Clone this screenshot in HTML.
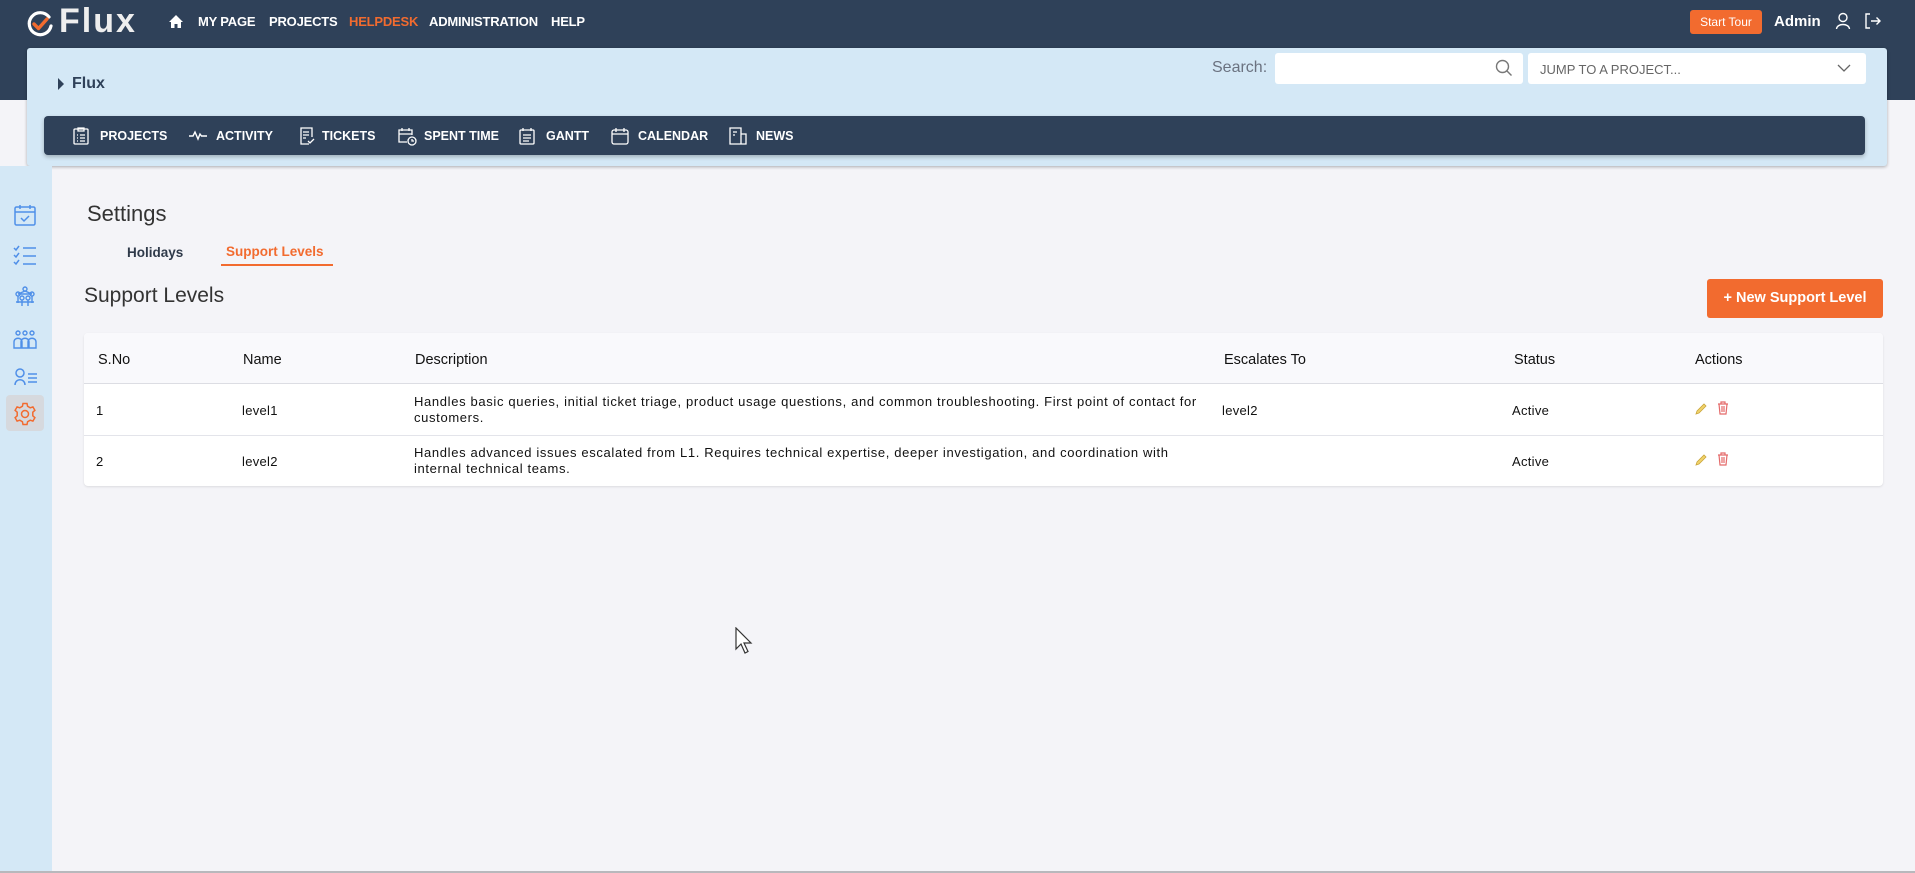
<!DOCTYPE html>
<html><head><meta charset="utf-8">
<style>
*{box-sizing:border-box;margin:0;padding:0}
body{width:1915px;height:873px;overflow:hidden;background:#f4f4f8;font-family:"Liberation Sans",sans-serif;position:relative;color:#222}
.abs{position:absolute}
.top{left:0;top:0;width:1915px;height:100px;background:#2f4159}
.nav{top:14px;color:#fff;font-size:13px;font-weight:bold;letter-spacing:-0.2px}
.panel{left:27px;top:48px;width:1860px;height:118px;background:#d4e8f6;border-radius:3px;box-shadow:0 1px 3px rgba(0,0,0,.3)}
.sub{left:44px;top:116px;width:1821px;height:39px;background:#2f4159;border-radius:4px;box-shadow:0 2px 4px rgba(0,0,0,.25)}
.si{top:13px;color:#fff;font-size:12.5px;font-weight:bold}
.sic{top:11px}
.side{left:0;top:166px;width:52px;height:705px;background:#d4e8f6}
.th{top:352px;font-size:14.5px;color:#111}
.td{font-size:13px;color:#111;letter-spacing:0.3px}
.desc{letter-spacing:0.65px}
</style></head><body>
<div class="abs top"></div>
<svg class="abs" style="left:25px;top:9px" width="30" height="30" viewBox="0 0 30 30"><path d="M24 8 A11 11 0 1 0 26 17" fill="none" stroke="#fff" stroke-width="3.2" stroke-linecap="round"/><path d="M9 15 L13.5 19.5 L22 10" fill="none" stroke="#f26b2f" stroke-width="3.4" stroke-linecap="round" stroke-linejoin="round"/></svg>
<div class="abs" style="left:59px;top:2px;color:#eee;font-size:34px;font-weight:bold;letter-spacing:2px">Flux</div>
<svg class="abs" style="left:168px;top:14px" width="16" height="15" viewBox="0 0 16 15"><path d="M8 1 L15 8 H13 V14 H9.5 V10 H6.5 V14 H3 V8 H1 Z" fill="#fff"/></svg>
<div class="abs nav" style="left:198px">MY PAGE</div>
<div class="abs nav" style="left:269px">PROJECTS</div>
<div class="abs nav" style="left:349px;color:#f26b2f">HELPDESK</div>
<div class="abs nav" style="left:429px">ADMINISTRATION</div>
<div class="abs nav" style="left:551px">HELP</div>
<div class="abs" style="left:1690px;top:10px;width:72px;height:24px;background:#f26b2f;border-radius:3px;color:#fff;font-size:12px;line-height:24px;text-align:center">Start Tour</div>
<div class="abs" style="left:1774px;top:13px;color:#fff;font-size:15px;font-weight:bold">Admin</div>
<svg class="abs" style="left:1835px;top:12px" width="16" height="18" viewBox="0 0 16 18"><circle cx="8" cy="5.5" r="4" fill="none" stroke="#fff" stroke-width="1.4"/><path d="M1.5 17 C2 11 14 11 14.5 17" fill="none" stroke="#fff" stroke-width="1.4"/></svg>
<svg class="abs" style="left:1864px;top:12px" width="18" height="18" viewBox="0 0 18 18"><path d="M6 2 H2 V16 H6" fill="none" stroke="#fff" stroke-width="1.4"/><path d="M7 9 H16 M12.5 5.5 L16 9 L12.5 12.5" fill="none" stroke="#fff" stroke-width="1.4"/></svg>

<div class="abs panel"></div>
<div class="abs" style="left:58px;top:78px;width:0;height:0;border-top:6px solid transparent;border-bottom:6px solid transparent;border-left:6px solid #2f4159"></div>
<div class="abs" style="left:72px;top:75px;font-size:16px;font-weight:bold;color:#2f4159">Flux</div>
<div class="abs" style="left:1212px;top:59px;font-size:16px;color:#6b7280">Search:</div>
<div class="abs" style="left:1275px;top:53px;width:248px;height:31px;background:#fff;border-radius:3px"></div>
<svg class="abs" style="left:1495px;top:59px" width="18" height="18" viewBox="0 0 18 18"><circle cx="7.5" cy="7.5" r="6" fill="none" stroke="#777" stroke-width="1.4"/><path d="M12 12 L16.5 16.5" stroke="#777" stroke-width="1.4"/></svg>
<div class="abs" style="left:1528px;top:53px;width:338px;height:31px;background:#fff;border-radius:3px"></div>
<div class="abs" style="left:1540px;top:62px;font-size:13px;color:#666">JUMP TO A PROJECT...</div>
<svg class="abs" style="left:1837px;top:63px" width="14" height="10" viewBox="0 0 14 10"><path d="M1 2 L7 8 L13 2" fill="none" stroke="#666" stroke-width="1.3"/></svg>

<div class="abs sub">
<svg class="abs sic" style="left:29px" width="16" height="18" viewBox="0 0 16 18" fill="none" stroke="#fff" stroke-width="1.3"><rect x="1" y="2" width="14" height="15" rx="1"/><path d="M5 1 H11 V4 H5 Z M4 8 H5 M7 8 H12 M4 11 H5 M7 11 H12 M4 14 H5 M7 14 H12"/></svg>
<div class="abs si" style="left:56px">PROJECTS</div>
<svg class="abs sic" style="left:145px;top:13px" width="18" height="12" viewBox="0 0 18 12" fill="none" stroke="#fff" stroke-width="1.4"><path d="M0 7 H4 L6 3 L9 10 L11 5 L12.5 7 H18"/></svg>
<div class="abs si" style="left:172px">ACTIVITY</div>
<svg class="abs sic" style="left:255px" width="16" height="18" viewBox="0 0 16 18" fill="none" stroke="#fff" stroke-width="1.3"><path d="M10 17 H2 V1 H13 V10 M4 5 H10 M4 8 H10 M4 11 H7 M9 14 L11 16 L15 12"/></svg>
<div class="abs si" style="left:278px">TICKETS</div>
<svg class="abs sic" style="left:354px" width="19" height="19" viewBox="0 0 19 19" fill="none" stroke="#fff" stroke-width="1.3"><path d="M9 15 H1 V3 H14 V8 M1 7 H14 M4 1 V4 M11 1 V4"/><circle cx="14" cy="14" r="4"/><path d="M14 12 V14 H16"/></svg>
<div class="abs si" style="left:380px">SPENT TIME</div>
<svg class="abs sic" style="left:475px" width="16" height="18" viewBox="0 0 16 18" fill="none" stroke="#fff" stroke-width="1.3"><rect x="1" y="3" width="14" height="14" rx="1"/><path d="M4 1 V4 M12 1 V4 M4 8 H12 M4 11 H12 M4 14 H10"/></svg>
<div class="abs si" style="left:502px">GANTT</div>
<svg class="abs sic" style="left:567px" width="18" height="18" viewBox="0 0 18 18" fill="none" stroke="#fff" stroke-width="1.3"><rect x="1" y="3" width="16" height="14" rx="2"/><path d="M5 1 V5 M13 1 V5 M1 7 H17"/></svg>
<div class="abs si" style="left:594px">CALENDAR</div>
<svg class="abs sic" style="left:685px" width="18" height="18" viewBox="0 0 18 18" fill="none" stroke="#fff" stroke-width="1.3"><path d="M12 17 H1 V1 H12 V17 M12 7 H17 V17 H12 M4 5 H8 M4 8 H6"/></svg>
<div class="abs si" style="left:712px">NEWS</div>
</div>

<div class="abs side"></div>
<svg class="abs" style="left:14px;top:204px" width="22" height="22" viewBox="0 0 22 22" fill="none" stroke="#4f8fe8" stroke-width="1.5"><rect x="1" y="3" width="20" height="18" rx="1.5"/><path d="M1 8 H21 M6 1 V5 M16 1 V5 M7 14 L10 17 L15 12"/></svg>
<svg class="abs" style="left:13px;top:245px" width="24" height="22" viewBox="0 0 24 22" fill="none" stroke="#4f8fe8" stroke-width="1.5"><path d="M1 3 L3 5 L6 1 M1 10 L3 12 L6 8 M1 17 L3 19 L6 15 M10 3 H23 M10 11 H23 M10 19 H23"/></svg>
<svg class="abs" style="left:14px;top:286px" width="22" height="22" viewBox="0 0 22 22" fill="none" stroke="#4f8fe8" stroke-width="1.4"><circle cx="11" cy="3" r="2"/><circle cx="4" cy="8" r="2"/><circle cx="18" cy="8" r="2"/><circle cx="8" cy="12" r="2"/><circle cx="14" cy="12" r="2"/><path d="M11 5 L4 8 M11 5 L18 8 M4 10 V17 M18 10 V17 M8 14 V20 M14 14 V20 M4 8 H18 M2 16 H20"/></svg>
<svg class="abs" style="left:13px;top:330px" width="24" height="20" viewBox="0 0 24 20" fill="none" stroke="#4f8fe8" stroke-width="1.4"><circle cx="5" cy="3" r="2"/><circle cx="12" cy="3" r="2"/><circle cx="19" cy="3" r="2"/><path d="M1 12 C1 7 9 7 9 12 V18 H1 Z M8 12 C8 7 16 7 16 12 V18 H8 Z M15 12 C15 7 23 7 23 12 V18 H15 Z"/></svg>
<svg class="abs" style="left:14px;top:368px" width="24" height="18" viewBox="0 0 24 18" fill="none" stroke="#4f8fe8" stroke-width="1.5"><circle cx="6" cy="5" r="4"/><path d="M1 17 C1 10 11 10 11 17 M14 6 H23 M14 10 H23 M14 14 H23"/></svg>
<div class="abs" style="left:6px;top:395px;width:38px;height:36px;background:#d6d9de;border-radius:4px"></div>
<svg class="abs" style="left:13px;top:402px" width="24" height="24" viewBox="0 0 24 24" fill="none" stroke="#f26b2f" stroke-width="1.5"><circle cx="12" cy="12" r="3.5"/><path d="M10 1.5 H14 L14.6 4.3 L17.2 5.8 L19.9 4.9 L21.9 8.3 L19.8 10.2 V13.8 L21.9 15.7 L19.9 19.1 L17.2 18.2 L14.6 19.7 L14 22.5 H10 L9.4 19.7 L6.8 18.2 L4.1 19.1 L2.1 15.7 L4.2 13.8 V10.2 L2.1 8.3 L4.1 4.9 L6.8 5.8 L9.4 4.3 Z"/></svg>

<div class="abs" style="left:87px;top:201px;font-size:22px;color:#333">Settings</div>
<div class="abs" style="left:127px;top:245px;font-size:13.5px;font-weight:bold;color:#2f3a4a">Holidays</div>
<div class="abs" style="left:226px;top:244px;font-size:13.5px;font-weight:bold;color:#f26b2f">Support Levels</div>
<div class="abs" style="left:221px;top:264px;width:112px;height:2px;background:#f26b2f"></div>
<div class="abs" style="left:84px;top:284px;font-size:21px;color:#333">Support Levels</div>
<div class="abs" style="left:1707px;top:279px;width:176px;height:39px;background:#f26b2f;border-radius:3px;color:#fff;font-size:14.5px;font-weight:bold;line-height:39px;text-align:center">+ New Support Level</div>

<div class="abs" style="left:84px;top:333px;width:1799px;height:153px;background:#fff;border-radius:4px;box-shadow:0 1px 2px rgba(0,0,0,.1)"></div>
<div class="abs" style="left:84px;top:333px;width:1799px;height:51px;background:#f9f9fc;border-bottom:1px solid #dcdde3;border-radius:4px 4px 0 0"></div>
<div class="abs" style="left:84px;top:435px;width:1799px;height:1px;background:#e3e4ea"></div>
<div class="abs th" style="left:98px">S.No</div>
<div class="abs th" style="left:243px">Name</div>
<div class="abs th" style="left:415px">Description</div>
<div class="abs th" style="left:1224px">Escalates To</div>
<div class="abs th" style="left:1514px">Status</div>
<div class="abs th" style="left:1695px">Actions</div>

<div class="abs td" style="left:96px;top:403px">1</div>
<div class="abs td" style="left:242px;top:403px">level1</div>
<div class="abs td desc" style="left:414px;top:394px;line-height:16px;white-space:nowrap">Handles basic queries, initial ticket triage, product usage questions, and common troubleshooting. First point of contact for<br>customers.</div>
<div class="abs td" style="left:1222px;top:403px">level2</div>
<div class="abs td" style="left:1512px;top:403px">Active</div>
<div class="abs td" style="left:96px;top:454px">2</div>
<div class="abs td" style="left:242px;top:454px">level2</div>
<div class="abs td desc" style="left:414px;top:445px;line-height:16px;white-space:nowrap">Handles advanced issues escalated from L1. Requires technical expertise, deeper investigation, and coordination with<br>internal technical teams.</div>
<div class="abs td" style="left:1512px;top:454px">Active</div>

<svg class="abs" style="left:1694px;top:402px" width="14" height="14" viewBox="0 0 14 14"><path d="M2 12 L3 9 L10 2 L12 4 L5 11 Z" fill="#f1d36b" stroke="#c9a53a" stroke-width=".8"/></svg>
<svg class="abs" style="left:1717px;top:401px" width="12" height="14" viewBox="0 0 12 14" fill="none" stroke="#e46a6a" stroke-width="1.2"><path d="M1 3 H11 M4 3 V1 H8 V3 M2 3 L3 13 H9 L10 3 M5 5 V11 M7 5 V11"/></svg>
<svg class="abs" style="left:1694px;top:453px" width="14" height="14" viewBox="0 0 14 14"><path d="M2 12 L3 9 L10 2 L12 4 L5 11 Z" fill="#f1d36b" stroke="#c9a53a" stroke-width=".8"/></svg>
<svg class="abs" style="left:1717px;top:452px" width="12" height="14" viewBox="0 0 12 14" fill="none" stroke="#e46a6a" stroke-width="1.2"><path d="M1 3 H11 M4 3 V1 H8 V3 M2 3 L3 13 H9 L10 3 M5 5 V11 M7 5 V11"/></svg>

<svg class="abs" style="left:735px;top:627px" width="20" height="28" viewBox="0 0 20 28"><path d="M1 1 V22 L6 17 L10 26 L13 24.5 L9 16 H16 Z" fill="#fff" stroke="#333" stroke-width="1.2"/></svg>
<div class="abs" style="left:0;top:871px;width:1915px;height:2px;background:#b8b8bc"></div>
</body></html>
